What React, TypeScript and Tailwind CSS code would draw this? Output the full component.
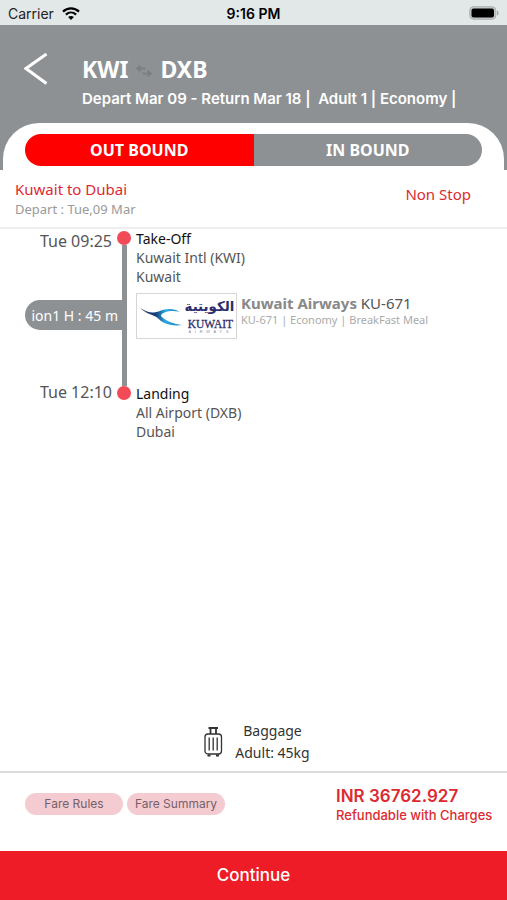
const pageFont = "font-['Noto_Sans',sans-serif]";
const uiFont = "font-['Inter',sans-serif]";

const stops = [
  { title: "Take-Off", airport: "Kuwait Intl (KWI)", city: "Kuwait" },
  { title: "Landing", airport: "All Airport (DXB)", city: "Dubai" },
];

const StatusBar = () => (
  <div
    className={`grid h-[25px] grid-cols-3 items-center bg-[#e2e7e7] px-2 text-sm text-[#222] ${uiFont}`}
  >
    <div className="flex items-center gap-2 pt-0.5">
      Carrier
      <svg viewBox="0 0 18 13" className="h-[13px] w-[18px]" fill="none" stroke="#000">
        <path d="M1 4.6C5.5.3 12.5.3 17 4.6" strokeWidth="2.3" />
        <path d="M3.9 7.6c3-2.8 7.2-2.8 10.2 0" strokeWidth="2.2" />
        <path d="M9 13 6.1 10.1c1.6-1.5 4.2-1.5 5.8 0z" fill="#000" stroke="none" />
      </svg>
    </div>
    <div className="pt-0.5 text-center font-semibold text-black">9:16 PM</div>
    <svg viewBox="0 0 30 14" className="h-3.5 w-[30px] justify-self-end">
      <rect x=".75" y=".75" width="26" height="12.5" rx="3.5" fill="#c4c9c9" stroke="#a9aeae" />
      <rect x="2.5" y="2.5" width="22.5" height="9" rx="2" fill="#000" />
      <path d="M28 4.5c2 .8 2 4.2 0 5z" fill="#9da2a2" />
    </svg>
  </div>
);

const Header = () => (
  <header className="bg-[#8e9194]">
    <div className="flex items-start px-6 pt-7 text-white">
      <button aria-label="Back" className="w-[58px] shrink-0">
        <svg viewBox="0 0 24 32" className="h-8 w-6" fill="none" stroke="currentColor" strokeWidth="3">
          <path d="M22.5 1 2 15.5 22.5 30.5" />
        </svg>
      </button>
      <div>
        <h1 className={`flex items-center gap-2 text-[23px] leading-8 font-bold ${pageFont}`}>
          KWI
          <svg viewBox="0 0 16 12" className="mt-1 h-3 w-4" fill="none" stroke="#7c7f81" strokeWidth="1.8">
            <path d="M4.5.8 1 3.5l3.5 2.7M1 3.5h8.5M11.5 5.8 15 8.5l-3.5 2.7M15 8.5H6.5" />
          </svg>
          DXB
        </h1>
        <p className={`text-[15px] leading-7 font-semibold whitespace-pre ${uiFont}`}>
          {"Depart Mar 09 - Return Mar 18 |  Adult 1 | Economy |"}
        </p>
      </div>
    </div>
    {/* direction tabs */}
    <div className="mx-[3px] mt-2.5 rounded-t-[36px] bg-white px-[22px] pt-[11px] pb-1">
      <div className={`grid grid-cols-2 overflow-hidden rounded-full text-base font-bold text-white ${pageFont}`}>
        <button className="h-8 bg-[#fe0000]">OUT BOUND</button>
        <button className="h-8 bg-[#8e9194]">IN BOUND</button>
      </div>
    </div>
  </header>
);

const AirlineLogo = () => (
  <svg
    viewBox="0 0 100 46"
    className="h-[46px] w-[101px] shrink-0 border border-[#d6d6d6] bg-white"
    role="img"
    aria-label="Kuwait Airways"
  >
    <defs>
      <linearGradient id="wing" x1="0" x2="1">
        <stop offset="0" stopColor="#3b4566" />
        <stop offset=".35" stopColor="#163a78" />
        <stop offset=".6" stopColor="#2ba9e1" />
        <stop offset="1" stopColor="#1481bd" />
      </linearGradient>
    </defs>
    <path
      d="M2 15c5 3.2 9.500 4.500 14 4.300 4-.2 7-2.200 11-3 6-1.200 11-.6 15.500 2.200-5.500-1.200-11-1-15.500.8-3.500 1.500-4.500 3-3 4.500 3.500 3.500 11 7.200 21.500 8.700-8 1-15.500-.3-20.500-3.200-3-1.700-4.500-4.300-7.500-5.800C13 21.500 7 20 2 15z"
      fill="url(#wing)"
    />
    <text
      x="74"
      y="18"
      textAnchor="middle"
      fontSize="14"
      fontWeight="700"
      fill="#2d2c6c"
      className="font-['DejaVu_Sans',sans-serif]"
    >
      الكويتية
    </text>
    <text
      x="75"
      y="36"
      textAnchor="middle"
      fontSize="12"
      fill="#2d2c6c"
      stroke="#2d2c6c"
      strokeWidth=".3"
      className="font-['Liberation_Serif',serif]"
    >
      KUWAIT
    </text>
    <text x="52" y="41" fontSize="4" fill="#8b8aa8" className="font-['Liberation_Sans',sans-serif] tracking-[4px]">
      AIRWAYS
    </text>
  </svg>
);

const Stop = ({ stop }: { stop: (typeof stops)[number] }) => (
  <div className="col-start-3 text-sm leading-[19px] text-[#555]">
    <h3 className="text-[#111]">{stop.title}</h3>
    <p>{stop.airport}</p>
    <p>{stop.city}</p>
  </div>
);

const Timeline = () => (
  <section className="grid grid-cols-[112px_24px_1fr] grid-rows-[57px_98px_57px] text-[#555]">
    <p className="text-right text-base leading-6">Tue 09:25</p>
    <div className="col-start-2 row-span-3 row-start-1 flex flex-col items-center pt-0.5 pb-[41px]">
      <span className="size-3.5 rounded-full bg-[#f24a56]" />
      <span className="w-[5px] flex-1 bg-[#8e9194]" />
      <span className="size-3.5 rounded-full bg-[#f24a56]" />
    </div>
    <Stop stop={stops[0]} />

    <div className="col-span-2 col-start-1 row-start-2 mt-3.5 mr-3 ml-[25px] h-[30px] rounded-l-full bg-[#8e9194] pr-1.5 text-right text-sm leading-8 whitespace-nowrap text-white">
      ion1 H : 45 m
    </div>
    <div className="col-start-3 row-start-2 flex items-start gap-1 pt-[7px]">
      <AirlineLogo />
      <div>
        <h3 className="text-[15px] leading-5 text-[#555]">
          <b className="font-bold text-[#888]">Kuwait Airways</b> KU-671
        </h3>
        <p className="text-[11px] leading-3.5 text-[#aaa]">KU-671 | Economy | BreakFast Meal</p>
      </div>
    </div>

    <p className="row-start-3 text-right text-base leading-4">Tue 12:10</p>
    <Stop stop={stops[1]} />
  </section>
);

const Baggage = () => (
  <section className="flex items-center justify-center gap-3 pb-[7px] pl-1.5 text-sm leading-[22px] text-[#333]">
    <svg viewBox="0 0 20 32" className="h-8 w-5" fill="none" stroke="#333" strokeWidth="1.3">
      <path d="M5.5 2H15M7.5 2v6M13 2v6" strokeWidth="1.8" />
      <rect x="2" y="8" width="16.5" height="20" rx="3" />
      <path d="M6.2 11.5v13M10.2 11.5v13M14.2 11.5v13" />
      <path d="M4.5 29.5h3M13 29.5h3" strokeWidth="2" />
    </svg>
    <div className="text-center">
      <p>Baggage</p>
      <p>Adult: 45kg</p>
    </div>
  </section>
);

const Footer = () => (
  <footer className={uiFont}>
    <div className="flex h-20 items-start justify-between border-t-2 border-[#dcdcdc] pr-[11px] pl-[25px]">
      <div className="flex gap-1 pt-5 text-xs text-[#75616a]">
        <button className="h-[22px] w-[98px] rounded-full bg-[#f4cbd1]">Fare Rules</button>
        <button className="h-[22px] w-[98px] rounded-full bg-[#f4cbd1]">Fare Summary</button>
      </div>
      <div className="w-40 pt-3 text-[#dd2a32]">
        <p className="text-[17px] leading-[22px] font-semibold">INR 36762.927</p>
        <p className="text-[13px] leading-4 font-medium whitespace-nowrap">Refundable with Charges</p>
      </div>
    </div>
    <button className="h-[49px] w-full bg-[#ed1c26] text-[17px] font-medium text-white">Continue</button>
  </footer>
);

const App = () => (
  <div className={`flex min-h-screen flex-col bg-white ${pageFont}`}>
    <StatusBar />
    <Header />
    <main className="flex flex-1 flex-col">
      <div className="flex h-[59px] items-start justify-between border-b-2 border-[#eee] pt-2 pr-9 pl-[15px]">
        <div>
          <h2 className="text-[15px] leading-[22px] text-[#dd2a32]">Kuwait to Dubai</h2>
          <p className="text-[13px] leading-[18px] text-[#999]">Depart : Tue,09 Mar</p>
        </div>
        <p className="text-[15px] leading-8 text-[#dd2a32]">Non Stop</p>
      </div>
      <Timeline />
      <div className="flex-1" />
      <Baggage />
    </main>
    <Footer />
  </div>
);

export default App;
